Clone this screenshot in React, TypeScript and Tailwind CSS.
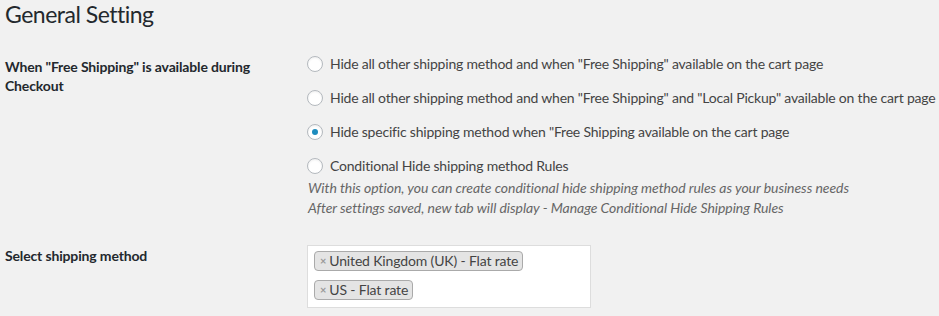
import React from "react";

const font = { fontFamily: 'Lato, "Open Sans", sans-serif' };

function Radio({ checked }: { checked?: boolean }) {
  return (
    <span className="grid h-4 w-4 shrink-0 place-items-center rounded-full border border-[#b4b9be] bg-white shadow-[inset_0_1px_2px_rgba(0,0,0,0.07)]">
      {checked && <span className="h-[6px] w-[6px] rounded-full bg-[#1e8cbe]" />}
    </span>
  );
}

function Tag({ label }: { label: string }) {
  return (
    <span className="inline-flex h-5 items-center gap-[3px] rounded-[4px] border border-[#aaa] bg-[#e4e4e4] pl-[5px] pr-[4px] text-[14px] leading-5 tracking-[-0.15px] text-[#444]">
      <span className="text-[11px] font-bold text-[#999]">×</span>
      {label}
    </span>
  );
}

const options = [
  { label: 'Hide all other shipping method and when "Free Shipping" available on the cart page' },
  {
    label:
      'Hide all other shipping method and when "Free Shipping" and "Local Pickup" available on the cart page',
  },
  { label: 'Hide specific shipping method when "Free Shipping available on the cart page', checked: true },
  { label: "Conditional Hide shipping method Rules" },
];

export default function App() {
  return (
    <div className="h-[316px] w-[939px] overflow-hidden bg-[#f1f1f1] text-[#444]" style={font}>
      <h2 className="pl-[5px] text-[23px] leading-[29px] font-normal tracking-[-0.5px] text-[#23282d]">
        General Setting
      </h2>

      {/* Free shipping behaviour */}
      <div className="mt-[25px] flex">
        <div className="w-[307px] shrink-0 pl-[5px] pt-[3px] text-[14px] leading-[19px] font-bold tracking-[-0.15px] text-[#23282d]">
          When "Free Shipping" is available during
          <br />
          Checkout
        </div>
        <div className="flex flex-col">
          <div className="flex flex-col gap-[14px]">
            {options.map((o) => (
              <label
                key={o.label}
                className="flex h-5 items-center gap-[7px] whitespace-nowrap text-[14px] leading-5 tracking-[-0.2px]"
              >
                <Radio checked={o.checked} />
                {o.label}
              </label>
            ))}
          </div>
          <p className="mt-[2px] pl-[1px] text-[14px] leading-5 tracking-[-0.05px] text-[#666] italic">
            With this option, you can create conditional hide shipping method rules as your business needs
            <br />
            After settings saved, new tab will display - Manage Conditional Hide Shipping Rules
          </p>
        </div>
      </div>

      {/* Shipping method select */}
      <div className="mt-[27px] flex">
        <div className="w-[307px] shrink-0 pl-[5px] pt-[1px] text-[14px] leading-5 font-bold tracking-[-0.15px] text-[#23282d]">
          Select shipping method
        </div>
        <div className="flex h-[63px] w-[284px] flex-col items-start gap-[9px] border border-[#ddd] bg-white pl-[6px] pt-[5px]">
          <Tag label="United Kingdom (UK) - Flat rate" />
          <Tag label="US - Flat rate" />
        </div>
      </div>
    </div>
  );
}
